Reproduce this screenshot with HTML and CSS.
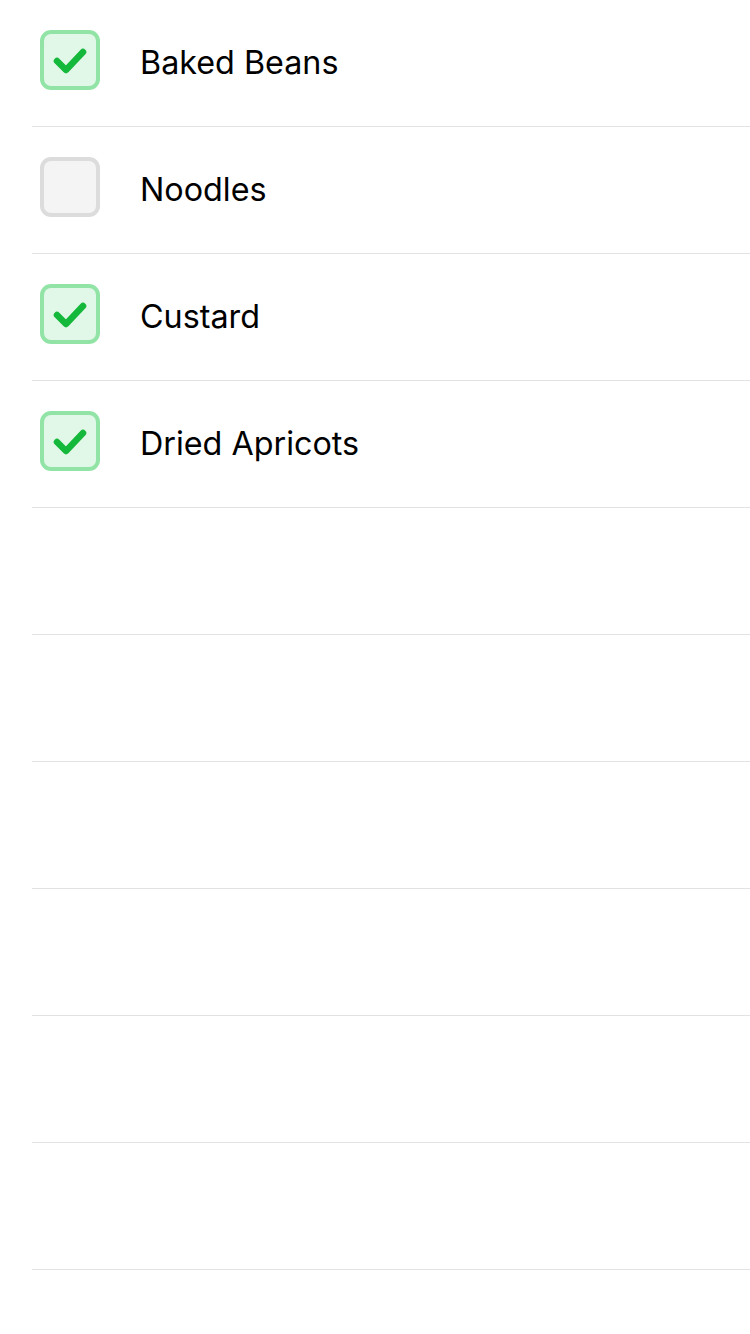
FILE: index.html
```html
<!DOCTYPE html>
<html>
<head>
<meta charset="utf-8">
<link rel="stylesheet" href="styles.css">
</head>
<body>
<ul class="list">
  <li class="row"><span class="box checked"><svg viewBox="0 0 60 60" class="tick"><path d="M17 31 L26 40 L43 22" /></svg></span><span class="label">Baked Beans</span></li>
  <li class="row"><span class="box"></span><span class="label">Noodles</span></li>
  <li class="row"><span class="box checked"><svg viewBox="0 0 60 60" class="tick"><path d="M17 31 L26 40 L43 22" /></svg></span><span class="label">Custard</span></li>
  <li class="row"><span class="box checked"><svg viewBox="0 0 60 60" class="tick"><path d="M17 31 L26 40 L43 22" /></svg></span><span class="label">Dried Apricots</span></li>
  <li class="row"></li>
  <li class="row"></li>
  <li class="row"></li>
  <li class="row"></li>
  <li class="row"></li>
  <li class="row"></li>
</ul>
</body>
</html>
```
FILE: styles.css
```css
html, body {
  margin: 0;
  padding: 0;
  background: #ffffff;
}
.list {
  list-style: none;
  margin: 0;
  padding: 0;
}
.row {
  margin-left: 32px;
  padding-left: 8px;
  height: 126px;
  border-bottom: 1px solid #e2e2e2;
  display: flex;
  align-items: center;
  gap: 40px;
  font-family: "Inter", "Roboto", sans-serif;
  font-size: 32.3px;
  color: #000;
}
.box {
  box-sizing: border-box;
  width: 60px;
  height: 60px;
  border-radius: 11px;
  border: 4px solid #dcdcdc;
  background: #f4f4f4;
  display: flex;
  align-items: center;
  justify-content: center;
  flex: none;
  margin-top: -6px;
}
.box.checked {
  border-color: #92e4a6;
  background: #e1f7e7;
}
.tick {
  width: 60px;
  height: 60px;
  margin: -4px;
}
.tick path {
  fill: none;
  stroke: #14b83a;
  stroke-width: 6.5;
  stroke-linecap: round;
  stroke-linejoin: round;
}
.label {
  margin-top: -2px;
}
```
